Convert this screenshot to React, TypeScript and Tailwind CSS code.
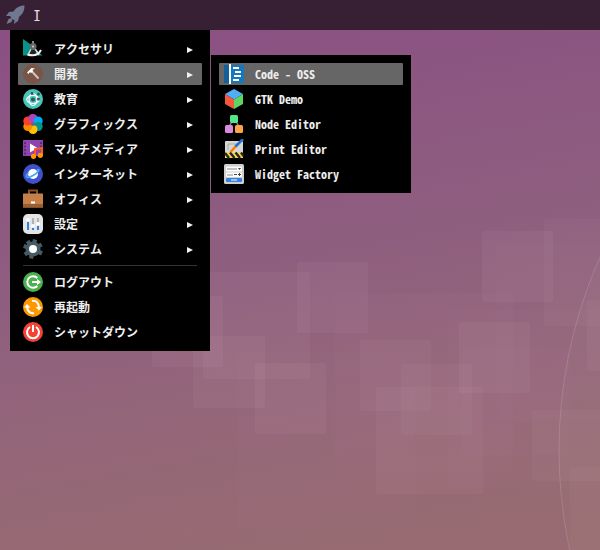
import type { ReactNode } from 'react';
import clsx from 'clsx';

type Item = { label: string; icon: ReactNode; active?: boolean };

function Icon({ children }: { children: ReactNode }) {
  return (
    <svg viewBox="0 0 20 20" className="size-5 shrink-0" aria-hidden="true">
      {children}
    </svg>
  );
}

const categories: Item[] = [
  {
    label: 'アクセサリ',
    icon: (
      <Icon>
        <path d="M0 0 L7 5 L19.500 16.500 H0 Z" fill="#079487" />
        <path d="M8 10 L4.500 17 H16 L12 10 Z" fill="#1d2626" />
        <path d="M8.500 9 L5 16 M11.500 9 L16 16" stroke="#d5d8da" strokeWidth="1.500" />
        <path d="M4.500 15.500 Q14 18.500 18 11" stroke="#f2f2f2" strokeWidth="2" fill="none" />
        <rect x="9" y="2" width="2" height="4" fill="#85878a" />
        <circle cx="10" cy="7.500" r="3.500" fill="#66686b" />
        <circle cx="10" cy="7.500" r="1" fill="#d5d5d5" />
      </Icon>
    ),
  },
  {
    label: '開発',
    active: true,
    icon: (
      <Icon>
        <circle cx="10" cy="10" r="10" fill="#795548" />
        <path d="M8.500 7 L15.500 14.500" stroke="#d7c3bb" strokeWidth="2" />
        <path d="M4 8.500 L8.500 4 L12 4.500 L9.500 6 L10 7.500 L8 9 L7 8 L5.500 10 Z" fill="#fff" />
      </Icon>
    ),
  },
  {
    label: '教育',
    icon: (
      <Icon>
        <circle cx="10" cy="10" r="10" fill="#48c5bb" />
        <ellipse cx="10" cy="10.500" rx="6.300" ry="4" fill="none" stroke="#fff" strokeWidth="1.200" />
        <ellipse cx="10" cy="10.500" rx="4" ry="6" fill="none" stroke="#fff" strokeWidth="1.200" />
        <circle cx="10" cy="10.500" r="2" fill="#3c5055" />
        <circle cx="9" cy="4.500" r="1.400" fill="#3c5055" />
        <circle cx="15.500" cy="5" r="1.500" fill="#3c5055" />
        <circle cx="15.500" cy="10" r="1.500" fill="#3c5055" />
      </Icon>
    ),
  },
  {
    label: 'グラフィックス',
    icon: (
      <Icon>
        <circle cx="10" cy="4.500" r="4.500" fill="#ab47bc" />
        <circle cx="15.200" cy="7" r="4.500" fill="#03a9f4" />
        <circle cx="15.200" cy="12.500" r="4.500" fill="#009688" />
        <circle cx="10" cy="15.500" r="4.500" fill="#ffc107" />
        <circle cx="4.800" cy="12.500" r="4.500" fill="#fb8c00" />
        <circle cx="4.800" cy="7" r="4.500" fill="#ff3d2e" />
        <path d="M10 10 L10 0 A4.500 4.500 0 0 0 6 6.500 Z" fill="#ab47bc" />
        <circle cx="10" cy="10" r="2" fill="#5c6a95" />
      </Icon>
    ),
  },
  {
    label: 'マルチメディア',
    icon: (
      <Icon>
        <rect y="1" width="20" height="16" rx="0.500" fill="#8e44ad" />
        <path d="M2 3 V16 M18 3 V8" stroke="#5d2b78" strokeWidth="2" strokeDasharray="2 1.500" />
        <path d="M7 4.500 L14.500 9 L7 13.500 Z" fill="#fff" />
        <path d="M12 17 V10 L19 9 V16" fill="none" stroke="#ff5722" strokeWidth="2" />
        <circle cx="10.500" cy="17.300" r="2.600" fill="#ff9800" />
        <circle cx="17.300" cy="16.300" r="2.600" fill="#ff9800" />
      </Icon>
    ),
  },
  {
    label: 'インターネット',
    icon: (
      <Icon>
        <circle cx="10" cy="10" r="10" fill="#3f51c8" />
        <circle cx="10" cy="10" r="5" fill="#fff" />
        <path d="M5 9 C1 14 5 14.500 10 11.500 C15 9 18 4.500 14 6" fill="none" stroke="#42a5f5" strokeWidth="1.800" />
      </Icon>
    ),
  },
  {
    label: 'オフィス',
    icon: (
      <Icon>
        <path d="M6 5 V1.500 H14 V5" fill="none" stroke="#8a5126" strokeWidth="2" />
        <rect y="4.500" width="20" height="14" rx="0.500" fill="#c58049" />
        <rect y="15" width="20" height="3.500" fill="#99602f" />
        <rect x="8" y="12.500" width="4" height="2" fill="#fff" />
      </Icon>
    ),
  },
  {
    label: '設定',
    icon: (
      <Icon>
        <rect width="20" height="20" rx="5" fill="#e4e4e4" />
        <path d="M5 4 V16 M10 4 V12 M15 4 V9" stroke="#b3b3b3" strokeWidth="2" />
        <path d="M5 6 V16 M10 13 V16 M15 11 V16" stroke="#3182df" strokeWidth="2" />
        <circle cx="5" cy="6" r="2" fill="#fff" />
        <circle cx="10" cy="12" r="2" fill="#fff" />
        <circle cx="15" cy="10" r="2" fill="#fff" />
      </Icon>
    ),
  },
  {
    label: 'システム',
    icon: (
      <Icon>
        <circle cx="10" cy="10" r="7.500" fill="#455a64" />
        <path
          d="M10 10 L12 .5 M10 10 L18.700 5.500 M10 10 L19 14.500 M10 10 L8 19.500 M10 10 L1.800 15.500 M10 10 L.7 7 M10 10 L4.500 2"
          stroke="#455a64"
          strokeWidth="4.200"
        />
        <circle cx="10" cy="10" r="4" fill="#fff" />
      </Icon>
    ),
  },
];

const sessionActions: Item[] = [
  {
    label: 'ログアウト',
    icon: (
      <Icon>
        <circle cx="10" cy="10" r="10" fill="#4caf50" />
        <path d="M14.300 6 A5.800 5.800 0 1 0 14.300 14 M9 10 H15" fill="none" stroke="#fff" strokeWidth="2" />
        <path d="M14 7 L18 10 L14 13 Z" fill="#fff" />
      </Icon>
    ),
  },
  {
    label: '再起動',
    icon: (
      <Icon>
        <circle cx="10" cy="10" r="10" fill="#ff9800" />
        <path d="M9 4 C13 3 16 6 16 11 M11 16 C7 17 4 14 4 9" fill="none" stroke="#fff" strokeWidth="2" />
        <path d="M12.500 10 H19 L16 13.500 Z M1 10.500 H7.500 L4 7 Z" fill="#fff" />
      </Icon>
    ),
  },
  {
    label: 'シャットダウン',
    icon: (
      <Icon>
        <circle cx="10" cy="10" r="10" fill="#f44336" />
        <path d="M7 5 A6 6 0 1 0 13 5 M10 3 V10" fill="none" stroke="#fff" strokeWidth="2" />
      </Icon>
    ),
  },
];

const devApps: Item[] = [
  {
    label: 'Code - OSS',
    active: true,
    icon: (
      <Icon>
        <rect y="1" width="6" height="18" fill="#13609b" />
        <rect x="6" y="1" width="14" height="18" fill="#1578be" />
        <rect x="5" width="2" height="20" fill="#fff" />
        <path d="M9 4 H15 M11 8 H17 M10 12 H17 M9 16 H15" stroke="#fff" strokeWidth="2" />
      </Icon>
    ),
  },
  {
    label: 'GTK Demo',
    icon: (
      <Icon>
        <path d="M10 0 L19 5 L10 10.500 L1 5 Z" fill="#50aef8" />
        <path d="M1 5 L10 10.500 V20 L1 15 Z" fill="#f4583d" />
        <path d="M19 5 L10 10.500 V20 L19 15 Z" fill="#5ed461" />
      </Icon>
    ),
  },
  {
    label: 'Node Editor',
    icon: (
      <Icon>
        <path d="M8 8 L5 12 M12 8 L15 12" stroke="#c8c8c8" strokeWidth="1" />
        <rect x="6" y="1" width="8" height="8" rx="1.500" fill="#57e389" />
        <rect x="1" y="11" width="8" height="8" rx="1.500" fill="#dc8add" />
        <rect x="11" y="11" width="8" height="8" rx="1.500" fill="#ffa348" />
      </Icon>
    ),
  },
  {
    label: 'Print Editor',
    icon: (
      <Icon>
        <rect x="1" y="2" width="18" height="13" rx="1" fill="#d8d6d2" />
        <path d="M4 11 V5 H14" fill="none" stroke="#aaa7a3" strokeWidth="1" />
        <rect x="1" y="13.500" width="18" height="5.500" fill="#f6d94b" />
        <path d="M1 14 L5 19 M6 13.500 L10.500 19 M11.500 13.500 L16 19 M17 13.500 L19.500 17" stroke="#252525" strokeWidth="2.400" />
        <path d="M6.500 13 L12 7" stroke="#ff7800" strokeWidth="2.400" />
        <path d="M11.500 7.500 L19 0" stroke="#2473d2" strokeWidth="2.600" />
      </Icon>
    ),
  },
  {
    label: 'Widget Factory',
    icon: (
      <Icon>
        <rect width="20" height="20" rx="1.500" fill="#cfcfcd" />
        <rect x="2" y="2.500" width="16" height="5" rx="1" fill="#fff" />
        <rect x="2" y="8.500" width="16" height="4.500" rx="1" fill="#fff" />
        <rect x="2" y="14" width="16" height="4" rx="1" fill="#3584e4" />
        <path d="M3 5 H13 M3 11 H9" stroke="#c2c2c2" strokeWidth="2" />
        <path d="M14 4 H17 L15.500 6 Z" fill="#444" />
        <path d="M10 10.500 H13 M14 10.500 H17 M15.500 9 V12" stroke="#444" strokeWidth="1" />
        <path d="M7 16 H13" stroke="#99c1f1" strokeWidth="2" />
      </Icon>
    ),
  },
];

// x, y, side, opacity
const squares = [
  [203, 272, 107, 0.04],
  [297, 262, 71, 0.05],
  [152, 296, 71, 0.05],
  [193, 336, 72, 0.05],
  [255, 363, 71, 0.05],
  [238, 352, 177, 0.015],
  [335, 293, 178, 0.02],
  [360, 340, 71, 0.045],
  [401, 364, 71, 0.04],
  [376, 387, 107, 0.04],
  [459, 322, 71, 0.05],
  [482, 231, 71, 0.05],
  [544, 219, 107, 0.035],
  [532, 410, 71, 0.035],
  [570, 467, 107, 0.03],
  [587, 300, 71, 0.04],
  [497, 243, 178, 0.015],
  [449, 310, 178, 0.015],
  [462, 348, 107, 0.02],
];

function Wallpaper() {
  return (
    <svg
      viewBox="0 0 600 550"
      preserveAspectRatio="xMidYMid slice"
      className="absolute inset-0 size-full"
      aria-hidden="true"
    >
      <defs>
        <linearGradient id="dusk" x1="0.4" y1="0" x2="0.6" y2="1">
          <stop offset="0" stopColor="#8a5083" />
          <stop offset="0.45" stopColor="#8e5e7f" />
          <stop offset="0.7" stopColor="#946679" />
          <stop offset="1" stopColor="#976b71" />
        </linearGradient>
      </defs>
      <rect width="600" height="550" fill="url(#dusk)" />
      {squares.map(([x, y, side, opacity]) => (
        <rect key={`${x}-${y}`} x={x} y={y} width={side} height={side} rx="2" fill="#ffd9ee" opacity={opacity} />
      ))}
      <circle cx="1034" cy="450" r="475" fill="#b8a89a" fillOpacity="0.05" stroke="#e5cbd2" strokeOpacity="0.2" />
    </svg>
  );
}

function MenuList({ items, submenu }: { items: Item[]; submenu?: boolean }) {
  return (
    <ul className="flex flex-col gap-[3px]">
      {items.map((item) => (
        <li key={item.label}>
          <button
            type="button"
            aria-haspopup={submenu ? 'menu' : undefined}
            aria-expanded={submenu ? !!item.active : undefined}
            className={clsx(
              'flex h-[22px] w-full items-center gap-[11px] rounded-[1px] pr-[9px] pl-[5px] text-left',
              item.active && 'bg-[#666666]',
            )}
          >
            {item.icon}
            <span className="grow pb-px whitespace-nowrap">{item.label}</span>
            {submenu && (
              <svg viewBox="0 0 6 8" className="h-2 w-1.5 shrink-0" aria-hidden="true">
                <path d="M0 2 L6 5 L0 8 Z" fill="#f2f2f2" />
              </svg>
            )}
          </button>
        </li>
      ))}
    </ul>
  );
}

export default function App() {
  return (
    <div className="relative isolate min-h-screen overflow-hidden bg-[#8e5e7f] font-['Noto_Sans_Mono_CJK_JP','Noto_Sans_CJK_JP',monospace] text-xs leading-4 font-bold text-[#eeeeee]">
      <Wallpaper />
      <div className="relative">
        <header className="flex h-[30px] items-center gap-[5px] bg-[#382034] px-[5px] font-normal text-[#e8dce8]">
          <button type="button" aria-label="Menu">
            <svg viewBox="0 0 20 20" className="size-5" aria-hidden="true">
              <path
                d="M19.500 .5 C14 .5 11 3 8.500 6.500 L4 7 L1 11 L5 11 L6.500 13 L3.500 14 L1.500 19 L6.500 17 L7.500 14 L9.500 15.500 L9 19 L13 16 L14 12 C17.500 9 19.500 6 19.500 .5 Z"
                fill="#6f7890"
              />
            </svg>
          </button>
          <button type="button" className="w-3.5 text-center text-sm">
            I
          </button>
        </header>
        <div className="ml-2.5 flex items-start gap-px">
          <nav aria-label="アプリケーション" className="w-[200px] bg-black p-2">
            <MenuList items={categories} submenu />
            <hr className="mx-[5px] my-[5px] border-[#333333]" />
            <MenuList items={sessionActions} />
          </nav>
          <nav aria-label="開発" className="mt-[25px] w-[200px] bg-black p-2">
            <MenuList items={devApps} />
          </nav>
        </div>
      </div>
    </div>
  );
}
